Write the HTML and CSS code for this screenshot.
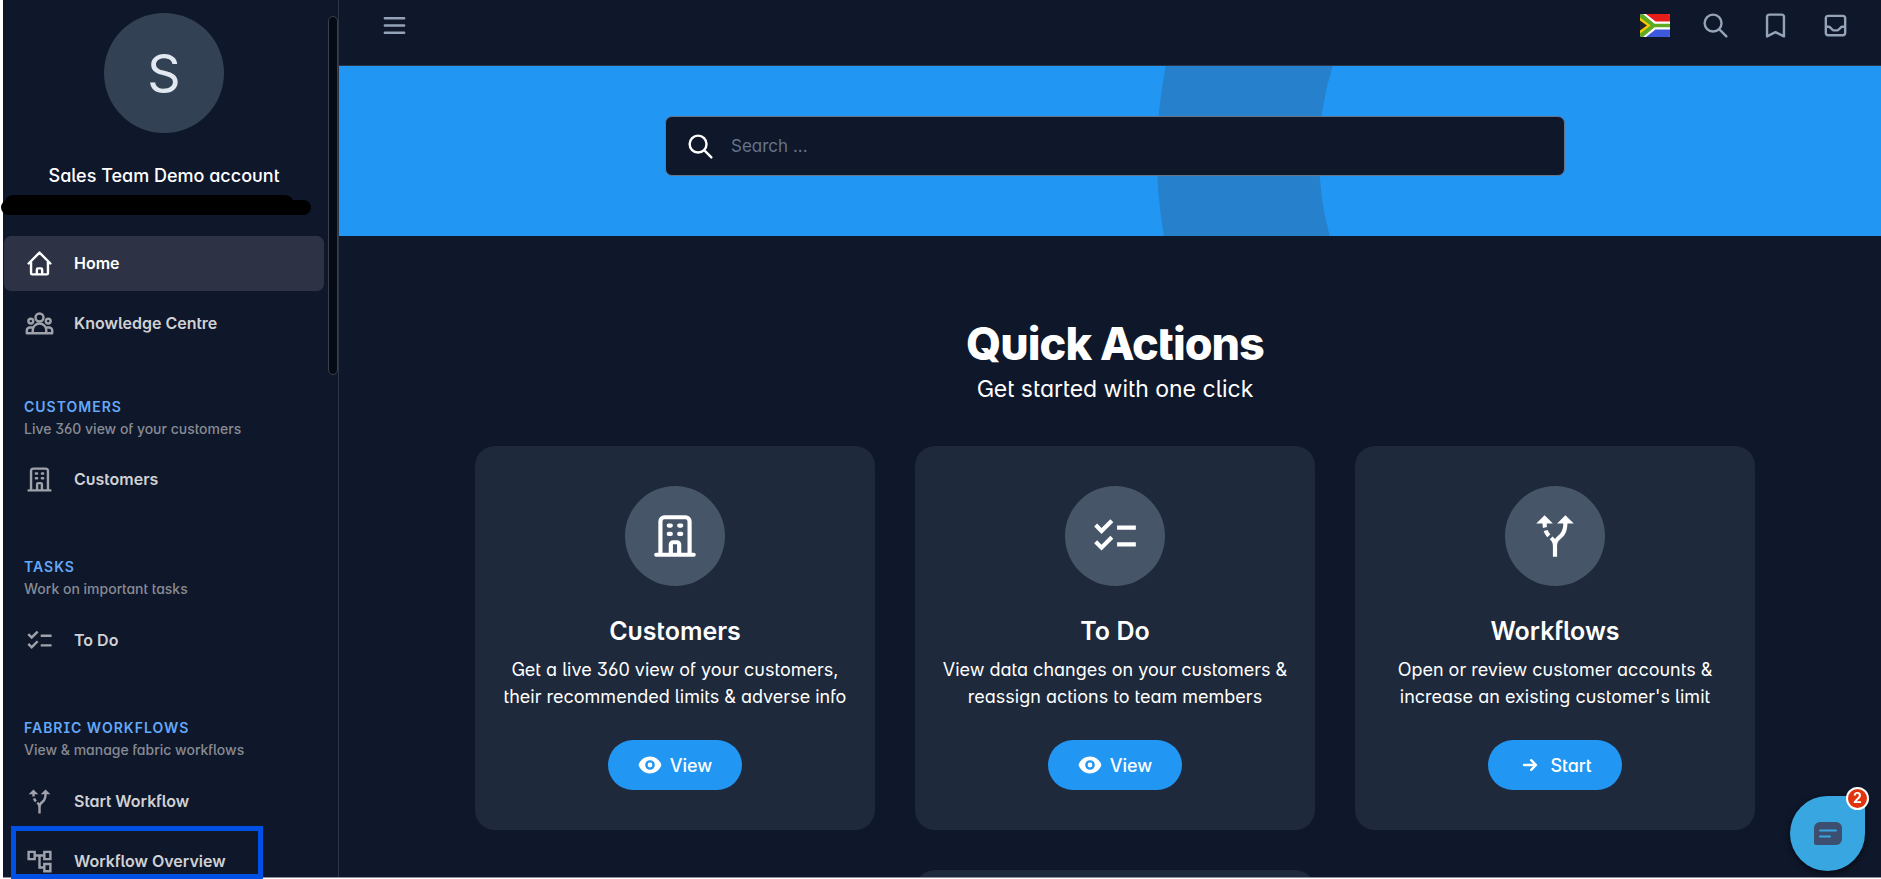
FILE: index.html
```html
<!DOCTYPE html>
<html lang="en">
<head>
<meta charset="utf-8">
<title>Home</title>
<link rel="stylesheet" href="styles.css">
</head>
<body>
<svg class="sprite" aria-hidden="true">
  <symbol id="i-home" viewBox="0 0 24 24"><path d="M3 12l9-9 9 9M5 10v10a1 1 0 001 1h12a1 1 0 001-1V10M9.800 21v-4a1 1 0 011-1h2.400a1 1 0 011 1v4"/></symbol>
  <symbol id="i-group" viewBox="0 0 24 24"><circle cx="12" cy="7" r="3.3"/><circle cx="4.8" cy="10" r="2"/><circle cx="19.2" cy="10" r="2"/><path d="M6.400 20v-2.400a5.600 5.600 0 0111.200 0V20zM6.600 15.300H4a2.500 2.500 0 00-2.500 2.500V20h4.900M17.400 15.300H20a2.500 2.500 0 012.500 2.500V20h-4.900"/></symbol>
  <symbol id="i-building" viewBox="0 0 24 24"><path d="M19 21V5a2 2 0 00-2-2H7a2 2 0 00-2 2v16M3 21h18M9 7h1M9 11h1M14 7h1M14 11h1M10 21v-5a1 1 0 011-1h2a1 1 0 011 1v5"/></symbol>
  <symbol id="i-check" viewBox="0 0 24 24"><path fill="currentColor" stroke="none" d="M22 7h-9v2h9V7zm0 8h-9v2h9v-2zM5.540 11L2 7.460l1.410-1.410 2.120 2.120 4.240-4.240 1.410 1.410L5.540 11zm0 8L2 15.460l1.410-1.410 2.120 2.120 4.240-4.240 1.410 1.410L5.540 19z"/></symbol>
  <symbol id="i-fork" viewBox="0 0 24 24"><path fill="currentColor" stroke="none" d="M9.780 11.160l-1.420 1.420c-.68-.69-1.340-1.580-1.790-2.940l1.940-.49c.32.890.770 1.500 1.270 2.010zM11 6L7 2 3 6h3.020c.020.810.080 1.540.190 2.170l1.940-.49C8.080 7.200 8.030 6.630 8.020 6H11zm10 0l-4-4-4 4h2.990c-.100 3.680-1.280 4.750-2.540 5.880-.500.440-1.010.920-1.450 1.550-.340-.490-.730-.880-1.130-1.240L9.460 13.600c.930.850 1.540 1.540 1.540 3.400v5h2v-5c0-2.020.710-2.660 1.790-3.630 1.380-1.240 3.080-2.780 3.200-7.370H21z"/></symbol>
  <symbol id="i-tree" viewBox="0 0 24 24"><path fill="currentColor" stroke="none" d="M22 11V3h-7v3H9V3H2v8h7V8h2v10h4v3h7v-8h-7v3h-2V8h2v3h7zM7 9H4V5h3v4zm10 6h3v4h-3v-4zm0-10h3v4h-3V5z"/></symbol>
  <symbol id="i-menu" viewBox="0 0 24 24"><path d="M4 6h16M4 12h16M4 18h16"/></symbol>
  <symbol id="i-search" viewBox="0 0 24 24"><path d="M21 21l-6-6m2-5a7 7 0 11-14 0 7 7 0 0114 0z"/></symbol>
  <symbol id="i-bookmark" viewBox="0 0 24 24"><path d="M5 5a2 2 0 012-2h10a2 2 0 012 2v16l-7-3.500L5 21V5z"/></symbol>
  <symbol id="i-inbox" viewBox="0 0 24 24"><path d="M20 13V6a2 2 0 00-2-2H6a2 2 0 00-2 2v7m16 0v5a2 2 0 01-2 2H6a2 2 0 01-2-2v-5m16 0h-2.590a1 1 0 00-.700.290l-2.420 2.420a1 1 0 01-.700.290h-3.180a1 1 0 01-.700-.290l-2.420-2.420A1 1 0 006.590 13H4"/></symbol>
  <symbol id="i-eye" viewBox="0 0 20 20"><path fill="currentColor" stroke="none" d="M10 12a2 2 0 100-4 2 2 0 000 4z"/><path fill="currentColor" stroke="none" fill-rule="evenodd" d="M.458 10C1.732 5.943 5.522 3 10 3s8.268 2.943 9.542 7c-1.274 4.057-5.064 7-9.542 7S1.732 14.057.458 10zM14 10a4 4 0 11-8 0 4 4 0 018 0z"/></symbol>
  <symbol id="i-arrow" viewBox="0 0 20 20"><path fill="currentColor" stroke="none" fill-rule="evenodd" d="M10.293 5.293a1 1 0 011.414 0l4 4a1 1 0 010 1.414l-4 4a1 1 0 01-1.414-1.414L12.586 11H5a1 1 0 110-2h7.586l-2.293-2.293a1 1 0 010-1.414z"/></symbol>
</svg>

<div class="app">
  <aside class="sidebar">
    <div class="profile">
      <div class="avatar">S</div>
      <div class="profile-name">Sales Team Demo account</div>
    </div>
    <nav class="nav">
      <a class="nav-item active" href="#"><svg class="icon"><use href="#i-home"/></svg>Home</a>
      <a class="nav-item" href="#"><svg class="icon"><use href="#i-group"/></svg>Knowledge Centre</a>
      <div class="nav-group">
        <div class="nav-title">CUSTOMERS</div>
        <div class="nav-sub">Live 360 view of your customers</div>
      </div>
      <a class="nav-item" href="#"><svg class="icon"><use href="#i-building"/></svg>Customers</a>
      <div class="nav-group">
        <div class="nav-title">TASKS</div>
        <div class="nav-sub">Work on important tasks</div>
      </div>
      <a class="nav-item" href="#"><svg class="icon"><use href="#i-check"/></svg>To Do</a>
      <div class="nav-group">
        <div class="nav-title">FABRIC WORKFLOWS</div>
        <div class="nav-sub">View &amp; manage fabric workflows</div>
      </div>
      <a class="nav-item" href="#"><svg class="icon"><use href="#i-fork"/></svg>Start Workflow</a>
      <a class="nav-item" href="#"><svg class="icon"><use href="#i-tree"/></svg>Workflow Overview</a>
    </nav>
    <div class="scroll-thumb"></div>
  </aside>

  <div class="main">
    <header class="topbar">
      <button class="icon-btn" aria-label="Menu"><svg class="icon"><use href="#i-menu"/></svg></button>
      <div class="topbar-actions">
        <button class="icon-btn" aria-label="Language">
          <svg class="flag" viewBox="0 0 30 23">
            <defs><clipPath id="flag-clip"><rect width="30" height="23" rx="2"/></clipPath></defs>
            <g clip-path="url(#flag-clip)">
              <rect width="30" height="23" fill="#fff"/>
              <path d="M6 0H30V7.500H15.500Z" fill="#e71d1a"/>
              <path d="M6 23H30V15.500H15.500Z" fill="#3d58db"/>
              <path d="M0 0H3L14.500 9.700H30V13.300H14.500L3 23H0Z" fill="#5eaa22"/>
              <path d="M0 3.500L10.500 11.500L0 19.500Z" fill="#fecb00"/>
              <path d="M0 6.500L7 11.500L0 16.500Z" fill="#272727"/>
            </g>
          </svg>
        </button>
        <button class="icon-btn" aria-label="Search"><svg class="icon"><use href="#i-search"/></svg></button>
        <button class="icon-btn" aria-label="Bookmarks"><svg class="icon"><use href="#i-bookmark"/></svg></button>
        <button class="icon-btn" aria-label="Inbox"><svg class="icon"><use href="#i-inbox"/></svg></button>
      </div>
    </header>

    <section class="banner">
      <svg class="banner-ring" viewBox="0 0 700 170" aria-hidden="true"><circle cx="466" cy="90" r="385" fill="none" stroke="#2680cc" stroke-width="162"/></svg>
      <label class="search"><svg class="icon"><use href="#i-search"/></svg><input type="text" placeholder="Search ..." aria-label="Search"></label>
    </section>

    <main class="content">
      <h1 class="heading">Quick Actions</h1>
      <p class="subheading">Get started with one click</p>
      <div class="cards">
        <article class="card">
          <div class="card-icon"><svg class="icon-lg"><use href="#i-building"/></svg></div>
          <h2 class="card-title">Customers</h2>
          <p class="card-text">Get a live 360 view of your customers,<br>their recommended limits &amp; adverse info</p>
          <button class="btn"><svg class="btn-icon"><use href="#i-eye"/></svg>View</button>
        </article>
        <article class="card">
          <div class="card-icon"><svg class="icon-lg"><use href="#i-check"/></svg></div>
          <h2 class="card-title">To Do</h2>
          <p class="card-text">View data changes on your customers &amp;<br>reassign actions to team members</p>
          <button class="btn"><svg class="btn-icon"><use href="#i-eye"/></svg>View</button>
        </article>
        <article class="card">
          <div class="card-icon"><svg class="icon-lg"><use href="#i-fork"/></svg></div>
          <h2 class="card-title">Workflows</h2>
          <p class="card-text">Open or review customer accounts &amp;<br>increase an existing customer's limit</p>
          <button class="btn"><svg class="btn-icon"><use href="#i-arrow"/></svg>Start</button>
        </article>
        <article class="card card-next"></article>
      </div>
    </main>
  </div>
</div>
<div class="redacted"></div>
<div class="highlight"></div>
<button class="chat" aria-label="Open chat">
  <svg class="chat-icon" viewBox="0 0 28 23"><path d="M6 0H22a6 6 0 016 6V17a6 6 0 01-6 6H2a2 2 0 01-2-2V6a6 6 0 016-6Z" fill="#3d4f70"/><path d="M6 8.500H22M6 14.500H16" stroke="#38a7e1" stroke-width="2" stroke-linecap="round"/></svg>
  <span class="badge">2</span>
</button>
</body>
</html>
```
FILE: styles.css
```css
* { box-sizing: border-box; }
body {
  margin: 0;
  height: 100vh;
  overflow: hidden;
  background: #fff;
  color: #fff;
  font-family: Inter, "Liberation Sans", sans-serif;
  font-feature-settings: "cv11", "salt";
}
h1, h2, p { margin: 0; }
button { font: inherit; font-feature-settings: inherit; color: inherit; border: 0; padding: 0; background: none; }
a { color: inherit; text-decoration: none; }
svg { flex: none; fill: none; stroke: currentColor; stroke-width: 2; stroke-linecap: round; stroke-linejoin: round; }
.sprite { position: absolute; width: 0; height: 0; }
.icon { width: 29px; height: 29px; }

.app { display: flex; height: calc(100vh - 1px); margin-left: 3px; overflow: hidden; border-bottom: 1px solid #8a9099; background: #0f172a; }

.sidebar { position: relative; flex: none; width: 336px; border-right: 1px solid #2b3344; overflow: hidden; }
.profile { display: flex; flex-direction: column; align-items: center; width: 322px; padding: 13px 0 26px; }
.avatar { display: grid; place-items: center; width: 120px; height: 120px; border-radius: 50%; background: #334155; color: #e2e8f0; font-size: 52px; }
.profile-name { margin-top: 29px; font-size: 18px; line-height: 28px; font-weight: 500; }
.nav { display: flex; flex-direction: column; gap: 5px; padding: 20px 14px 0 1px; }
.nav-item { display: flex; flex: none; align-items: center; gap: 20px; height: 55px; padding: 0 21px 1px; border-radius: 7px; color: #cfd1d4; font-size: 16px; font-weight: 600; }
.nav-item .icon { color: #9fa2aa; }
.nav-item.active, .nav-item.active .icon { color: #fff; }
.nav-item.active { background: #2d3345; }
.nav-group { height: 96px; padding: 44px 20px 0; }
.nav-group:first-of-type { height: 91px; padding-top: 40px; }
.nav-title { color: #64a8f9; font-size: 14px; line-height: 22px; font-weight: 600; letter-spacing: 1px; }
.nav-sub { color: #878b94; font-size: 14px; line-height: 22px; font-weight: 500; }
.scroll-thumb { position: absolute; top: 16px; right: 0; width: 10px; height: 359px; border: 1px solid #3a404b; border-radius: 5px; background: #050a14; }

.main { flex: 1; min-width: 0; }
.topbar { display: flex; align-items: center; justify-content: space-between; height: 66px; padding: 0 22px 14px 31px; border-bottom: 1px solid #2a3547; }
.topbar-actions { display: flex; gap: 12px; }
.icon-btn { display: grid; place-items: center; width: 48px; height: 48px; color: #94a3b8; }
.flag { width: 30px; height: 23px; stroke: none; }

.banner { position: relative; height: 170px; padding: 50px 0 60px 10px; background: #2196f3; overflow: hidden; }
.banner-ring { position: absolute; top: 0; left: 818px; width: 700px; height: 170px; }
.search { position: relative; display: flex; align-items: center; gap: 16px; width: 900px; max-width: 90%; height: 60px; margin: 0 auto; padding: 0 20px; border: 1px solid #64748b; border-radius: 7px; background: #0f172a; }
.search input { flex: 1; min-width: 0; border: 0; outline: 0; padding: 0; background: none; color: #fff; font: inherit; font-feature-settings: inherit; font-size: 17px; }
.search input::placeholder { color: #64748b; opacity: 1; }

.content { padding: 80px 0 0 10px; text-align: center; }
.heading { font-size: 45px; line-height: 56px; font-weight: 800; letter-spacing: -1px; }
.subheading { font-size: 23px; line-height: 34px; }
.cards { display: grid; grid-template-columns: repeat(3, 400px); justify-content: center; gap: 40px; margin-top: 40px; }
.card { display: flex; flex-direction: column; align-items: center; padding: 40px 20px; border-radius: 20px; background: #1e293b; }
.card-icon { display: grid; place-items: center; width: 100px; height: 100px; border-radius: 50%; background: #475569; }
.icon-lg { width: 50px; height: 50px; }
.card-title { margin-top: 29px; font-size: 25px; line-height: 32px; font-weight: 600; }
.card-text { margin-top: 9px; font-size: 18px; line-height: 27px; }
.btn { display: flex; align-items: center; gap: 8px; height: 50px; margin-top: 30px; padding: 0 30px; border-radius: 25px; background: #2196f3; font-size: 18px; font-weight: 500; }
.btn-icon { width: 24px; height: 24px; }
.card-next { grid-column: 2; height: 384px; }

/* Marker strokes laid over the page */
.redacted { position: absolute; left: 1px; top: 200px; width: 310px; height: 15px; border-radius: 8px; background: #000; }
.redacted::before { content: ""; position: absolute; left: 3px; top: -5px; width: 290px; height: 18px; border-radius: 9px; background: #000; }
.highlight { position: absolute; left: 11px; bottom: 0; width: 252px; height: 53px; border: 5px solid #0050e6; }

.chat { position: fixed; right: 16px; bottom: 8px; display: grid; place-items: center; width: 75px; height: 75px; border-radius: 50% 0 50% 50%; background: #38a7e1; box-shadow: 0 2px 6px rgba(0, 0, 0, .6); }
.chat-icon { width: 28px; height: 23px; stroke: none; }
.badge { position: absolute; top: -9px; right: -4px; width: 23px; height: 23px; border: 2px solid #fff; border-radius: 50%; background: #e2340c; font-size: 14px; line-height: 17px; font-weight: 700; }
```
